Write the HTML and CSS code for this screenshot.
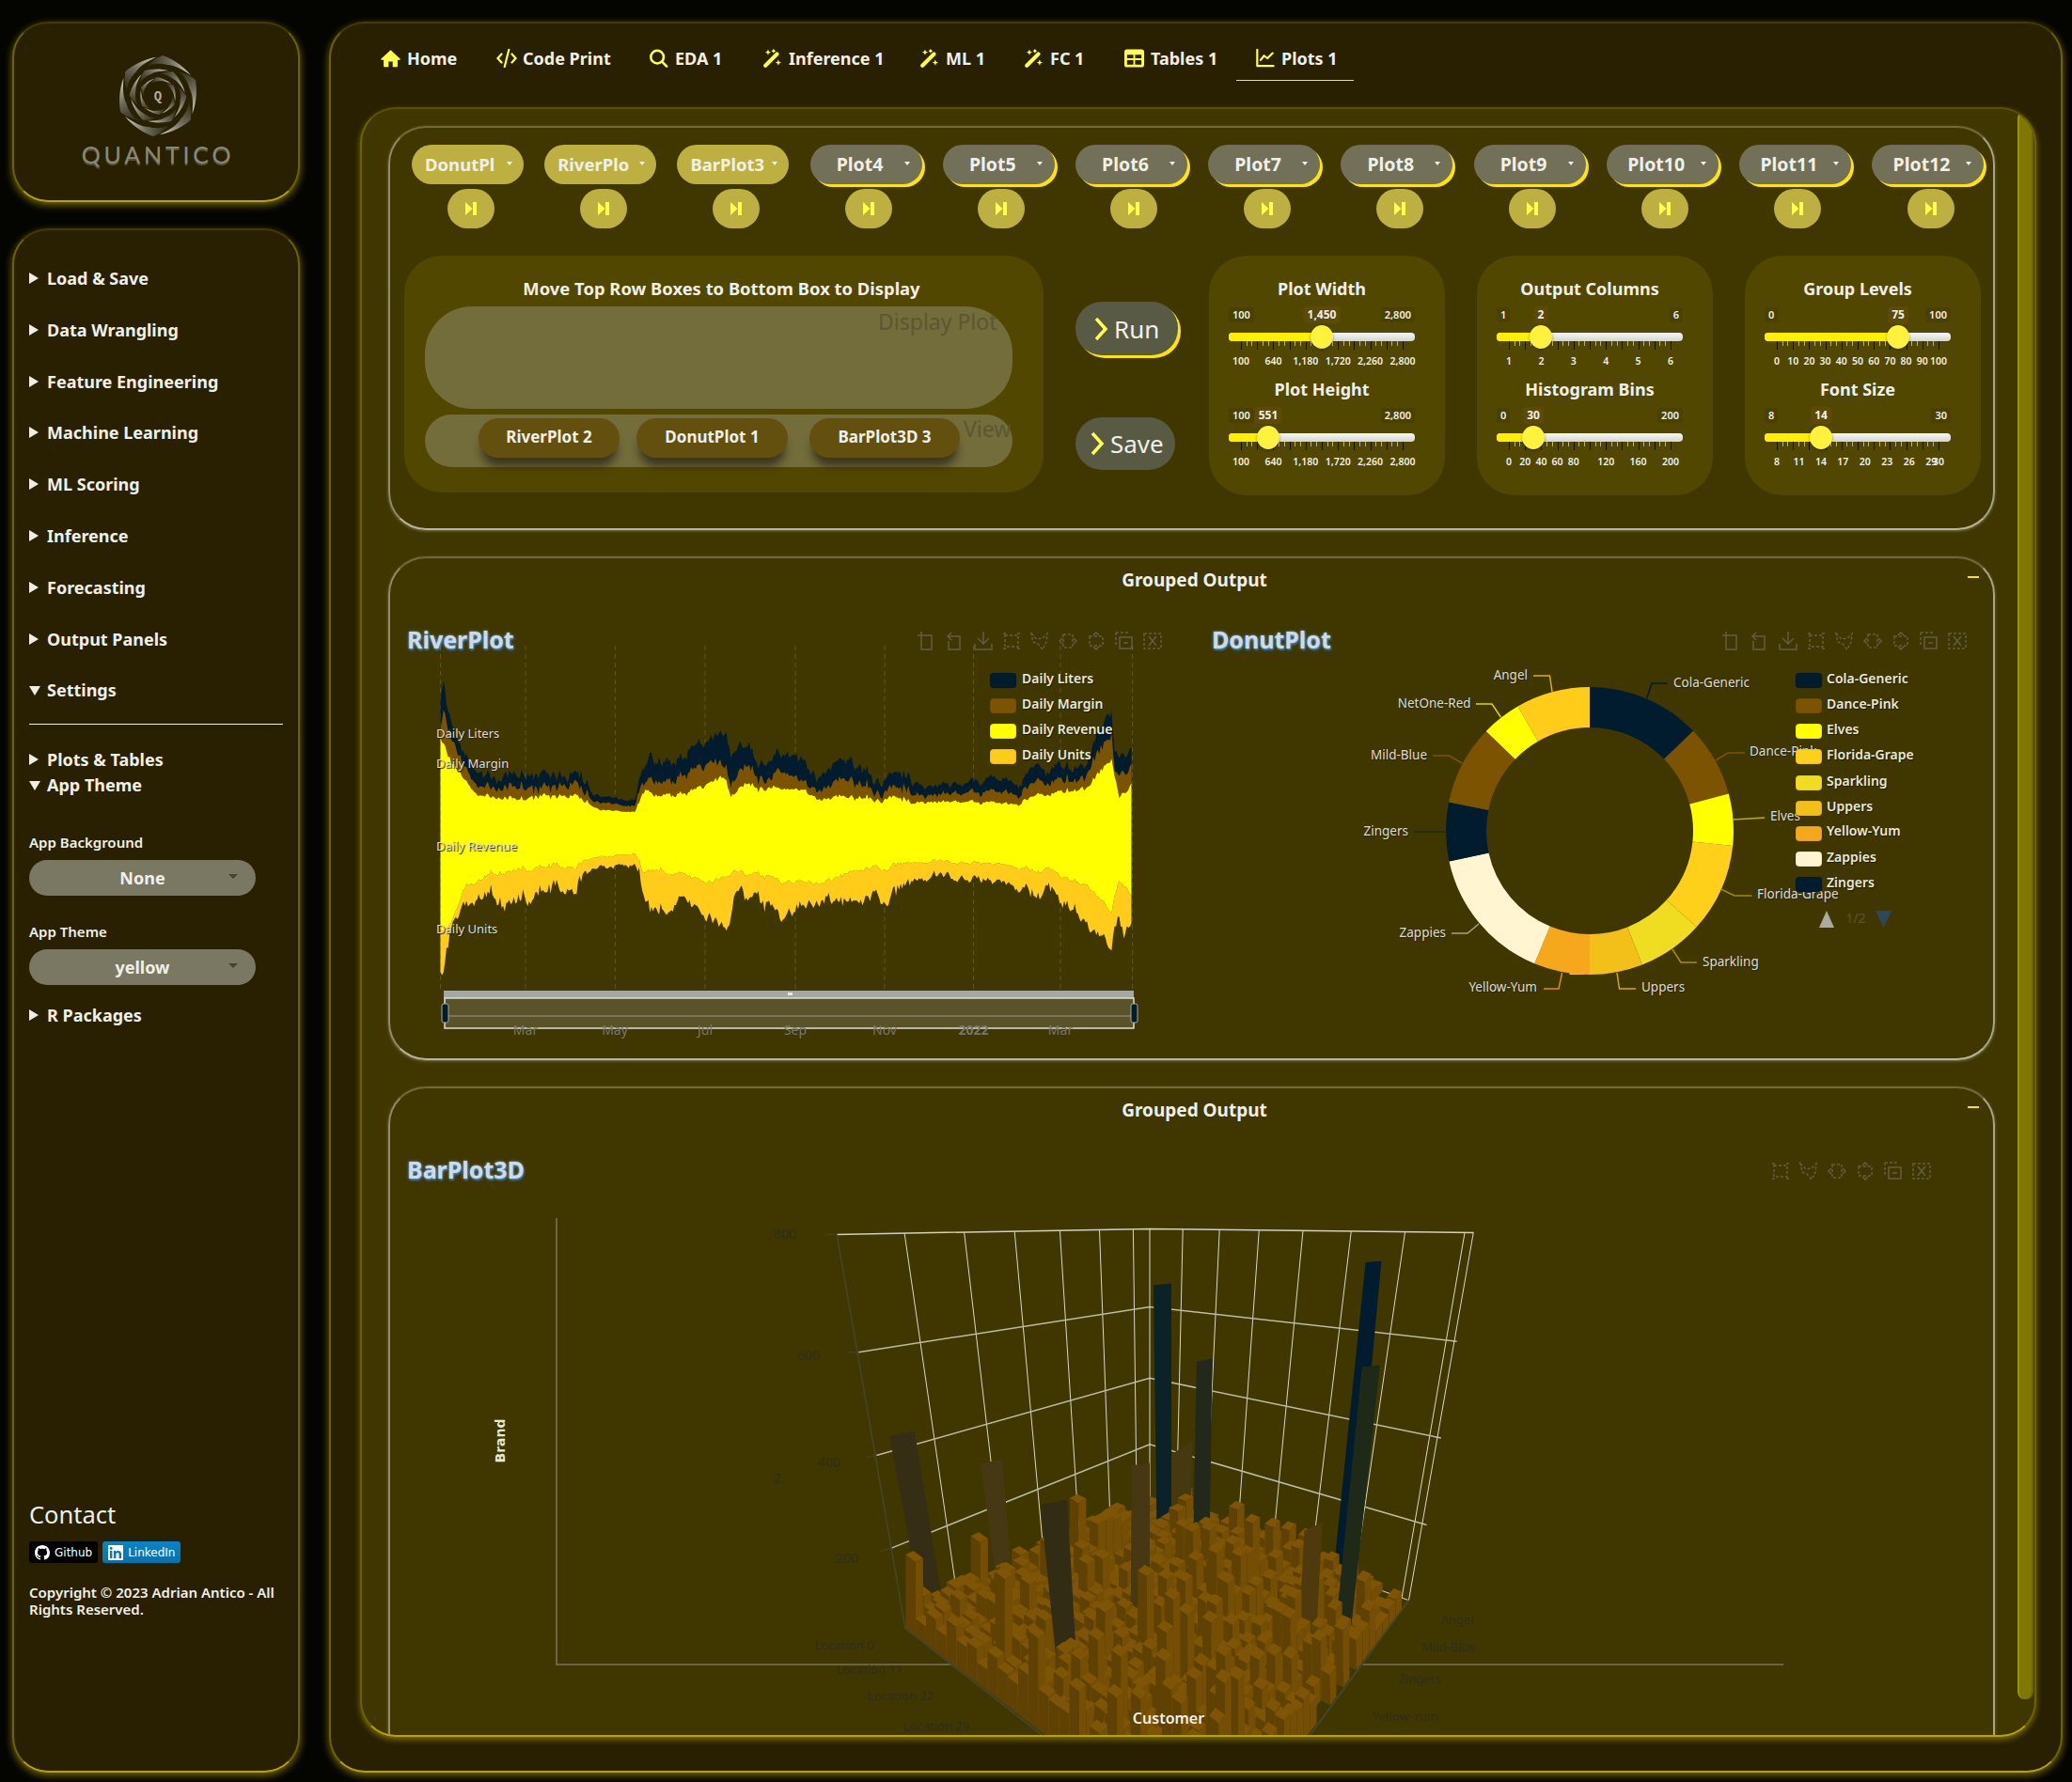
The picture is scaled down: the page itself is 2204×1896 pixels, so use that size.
FILE: index.html
```html
<!DOCTYPE html>
<html lang="en">
<head>
  <meta charset="UTF-8" />
  <meta name="viewport" content="width=device-width, initial-scale=1.0"/>
  <title>Quantico</title>
  <link rel="stylesheet" href="styles.css">
</head>
<body>
  <!-- shared icons -->
  <svg class="sprites" width="0" height="0">
    <defs>
      <linearGradient id="bladeFill" x1="0" y1="0.5" x2="1" y2="0.5">
        <stop offset="0" stop-color="#2a2810"/>
        <stop offset="0.5" stop-color="#6a6858"/>
        <stop offset="1" stop-color="#cfcebf"/>
      </linearGradient>
      <path id="blade" fill="url(#bladeFill)" d="M-12,-31 C-6,-38 0,-41 5,-43 C14,-40 26,-33 35,-22 C26,-28 18,-33 10,-33 C3,-35 -5,-35 -12,-31Z"/>
    </defs>
    <symbol id="t-zoom" viewBox="0 0 20 20"><path d="M0 4H15V19H4V0"/></symbol>
    <symbol id="t-back" viewBox="0 0 20 20"><path d="M6 1L2 5L6 9M2 5H15V19H3V10"/></symbol>
    <symbol id="t-save" viewBox="0 0 20 20"><path d="M10 0V13M4 7L10 13L16 7M1 13V19H19V13"/></symbol>
    <symbol id="t-rect" viewBox="0 0 20 20"><path stroke-dasharray="3 2" d="M3 4H17V16H3Z"/><path d="M1 2H4M16 2H19M1 18H4M16 18H19"/></symbol>
    <symbol id="t-poly" viewBox="0 0 20 20"><path stroke-dasharray="3 2" d="M1 2L7 8L13 7L18 2L17 11L13 19L8 13L3 11Z"/></symbol>
    <symbol id="t-linex" viewBox="0 0 20 20"><path stroke-dasharray="3 2" d="M5 3H15V17H5Z"/><path d="M4 7L1 10L4 13M16 7L19 10L16 13"/></symbol>
    <symbol id="t-liney" viewBox="0 0 20 20"><path stroke-dasharray="3 2" d="M3 5H17V15H3Z"/><path d="M7 4L10 1L13 4M7 16L10 19L13 16"/></symbol>
    <symbol id="t-keep" viewBox="0 0 20 20"><path stroke-dasharray="3 2" d="M1 1H13V4M1 1V13H4"/><path d="M5 6H18V18H5ZM9 12H14"/></symbol>
    <symbol id="t-clear" viewBox="0 0 20 20"><path stroke-dasharray="3 2" d="M1 2H19V18H1Z"/><path d="M6 5L14 15M14 5L6 15"/></symbol>
    <symbol id="skip" viewBox="0 0 16 16"><path d="M2 1L9.500 8L2 15ZM10 1H14V15H10Z"/></symbol>
    <symbol id="wand" viewBox="0 0 22 22">
      <path d="M3 19.500L16.500 6" fill="none" stroke="#ffff50" stroke-width="4.500" stroke-linecap="round"/>
      <path d="M15.500 1.500L16.500 0L17.500 1.500L19 2.500L17.500 3.500L16.500 5L15.500 3.500L14 2.500Z" transform="translate(-4 0)"/>
      <path d="M5 3L6 0.500L7 3L9.500 4L7 5L6 7.500L5 5L2.500 4Z"/>
      <path d="M17 15L18 12.500L19 15L21.500 16L19 17L18 19.500L17 17L14.500 16Z"/>
    </symbol>
  </svg>

  <div class="app">
    <aside class="sidebar">
      <div class="logo-card">
        <svg class="emblem" width="90" height="90" viewBox="-45 -45 90 90">
          <use href="#blade"/><use href="#blade" transform="rotate(60)"/><use href="#blade" transform="rotate(120)"/>
          <use href="#blade" transform="rotate(180)"/><use href="#blade" transform="rotate(240)"/><use href="#blade" transform="rotate(300)"/>
          <g transform="rotate(25) scale(.7)">
            <use href="#blade"/><use href="#blade" transform="rotate(60)"/><use href="#blade" transform="rotate(120)"/>
            <use href="#blade" transform="rotate(180)"/><use href="#blade" transform="rotate(240)"/><use href="#blade" transform="rotate(300)"/>
          </g>
          <g transform="rotate(50) scale(.46)">
            <use href="#blade"/><use href="#blade" transform="rotate(60)"/><use href="#blade" transform="rotate(120)"/>
            <use href="#blade" transform="rotate(180)"/><use href="#blade" transform="rotate(240)"/><use href="#blade" transform="rotate(300)"/>
          </g>
          <text class="emblem-q" x="0" y="5" text-anchor="middle">Q</text>
        </svg>
        <div class="logo-text">QUANTICO</div>
      </div>

      <nav class="menu-card">
        <div class="menu-item">Load &amp; Save</div>
        <div class="menu-item">Data Wrangling</div>
        <div class="menu-item">Feature Engineering</div>
        <div class="menu-item">Machine Learning</div>
        <div class="menu-item">ML Scoring</div>
        <div class="menu-item">Inference</div>
        <div class="menu-item">Forecasting</div>
        <div class="menu-item">Output Panels</div>
        <div class="menu-item open">Settings</div>
        <hr class="menu-rule">
        <div class="menu-item tight">Plots &amp; Tables</div>
        <div class="menu-item tight open">App Theme</div>
        <label class="field-label first">App Background</label>
        <div class="select-pill">None</div>
        <label class="field-label">App Theme</label>
        <div class="select-pill">yellow</div>
        <div class="menu-item last">R Packages</div>

        <div class="contact">
          <h4>Contact</h4>
          <div class="badges">
            <span class="badge github">
              <svg width="16" height="16" viewBox="0 0 16 16" fill="#fff"><path d="M8 0C3.58 0 0 3.58 0 8c0 3.54 2.29 6.53 5.47 7.59.4.07.55-.17.55-.38 0-.19-.01-.82-.01-1.49-2.01.37-2.53-.49-2.69-.94-.09-.23-.48-.94-.82-1.13-.28-.15-.68-.52-.01-.53.63-.01 1.08.58 1.23.82.72 1.21 1.87.87 2.33.66.07-.52.28-.87.51-1.07-1.78-.2-3.64-.89-3.64-3.95 0-.87.31-1.59.82-2.15-.08-.2-.36-1.02.08-2.12 0 0 .67-.21 2.2.82.64-.18 1.32-.27 2-.27s1.36.09 2 .27c1.53-1.04 2.2-.82 2.2-.82.44 1.1.16 1.92.08 2.12.51.56.82 1.27.82 2.15 0 3.07-1.87 3.75-3.65 3.95.29.25.54.73.54 1.48 0 1.07-.01 1.93-.01 2.2 0 .21.15.46.55.38A8.01 8.01 0 0 0 16 8c0-4.42-3.58-8-8-8z"/></svg>
              Github
            </span>
            <span class="badge linkedin">
              <svg width="16" height="16" viewBox="0 0 16 16"><rect width="16" height="16" fill="#fff"/><rect x="2" y="6" width="2.400" height="8" fill="#0a78b8"/><circle cx="3.200" cy="3.500" r="1.400" fill="#0a78b8"/><path fill="#0a78b8" d="M6 6H8.200V7.200C8.800 6.300 9.700 5.900 10.700 5.900C12.900 5.900 14 7.200 14 9.500V14H11.600V10C11.600 8.800 11.200 8 10.100 8C9 8 8.400 8.800 8.400 10V14H6Z"/></svg>
              LinkedIn
            </span>
          </div>
          <p class="copyright">Copyright © 2023 Adrian Antico - All Rights Reserved.</p>
        </div>
      </nav>
    </aside>

    <main class="main-card">
      <ul class="tabs">
        <li class="tab"><svg class="tab-icon" viewBox="0 0 24 22" fill="#ffff50"><path d="M12 1L0.500 11.500C0 12 .3 13 1.200 13H3.500V20C3.500 21 4 21.500 5 21.500H9.500V15H14.500V21.500H19C20 21.500 20.500 21 20.500 20V13H22.800C23.700 13 24 12 23.500 11.500Z"/></svg>Home</li>
        <li class="tab code"><svg class="tab-icon wide" viewBox="0 0 24 22" fill="none" stroke="#ffff50" stroke-width="2.400" stroke-linecap="round"><path d="M6 6L1.500 11L6 16M18 6L22.500 11L18 16M14.500 1L9.500 21"/></svg>Code Print</li>
        <li class="tab"><svg class="tab-icon" viewBox="0 0 22 22" fill="none" stroke="#ffff50" stroke-width="2.800" stroke-linecap="round"><circle cx="9.500" cy="9.500" r="7.500"/><path d="M15 15L20.500 20.500"/></svg>EDA 1</li>
        <li class="tab"><svg class="tab-icon" fill="#ffff50"><use href="#wand"/></svg>Inference 1</li>
        <li class="tab"><svg class="tab-icon" fill="#ffff50"><use href="#wand"/></svg>ML 1</li>
        <li class="tab"><svg class="tab-icon" fill="#ffff50"><use href="#wand"/></svg>FC 1</li>
        <li class="tab"><svg class="tab-icon" viewBox="0 0 22 20"><rect width="22" height="20" rx="3" fill="#ffff50"/><path d="M3 6H10V10H3ZM12 6H19V10H12ZM3 12H10V17H3ZM12 12H19V17H12Z" fill="#282000"/></svg>Tables 1</li>
        <li class="tab active"><svg class="tab-icon" viewBox="0 0 22 22" fill="none" stroke="#ffff50" stroke-width="2.400" stroke-linecap="round" stroke-linejoin="round"><path d="M2 1V20H21M6 13L10 8L14 11L20 5"/></svg>Plots 1</li>
      </ul>

      <div class="panel">
        <div class="scrollbar"></div>

        <section class="box controls">
          <div class="picker-row">
            <div class="picker"><div class="pick-btn on"><span class="pick-name">DonutPl</span></div><div class="skip-btn"><svg width="16" height="16"><use href="#skip"/></svg></div></div>
            <div class="picker"><div class="pick-btn on"><span class="pick-name">RiverPlo</span></div><div class="skip-btn"><svg width="16" height="16"><use href="#skip"/></svg></div></div>
            <div class="picker"><div class="pick-btn on"><span class="pick-name">BarPlot3</span></div><div class="skip-btn"><svg width="16" height="16"><use href="#skip"/></svg></div></div>
            <div class="picker"><div class="pick-btn"><span class="pick-name">Plot4</span></div><div class="skip-btn"><svg width="16" height="16"><use href="#skip"/></svg></div></div>
            <div class="picker"><div class="pick-btn"><span class="pick-name">Plot5</span></div><div class="skip-btn"><svg width="16" height="16"><use href="#skip"/></svg></div></div>
            <div class="picker"><div class="pick-btn"><span class="pick-name">Plot6</span></div><div class="skip-btn"><svg width="16" height="16"><use href="#skip"/></svg></div></div>
            <div class="picker"><div class="pick-btn"><span class="pick-name">Plot7</span></div><div class="skip-btn"><svg width="16" height="16"><use href="#skip"/></svg></div></div>
            <div class="picker"><div class="pick-btn"><span class="pick-name">Plot8</span></div><div class="skip-btn"><svg width="16" height="16"><use href="#skip"/></svg></div></div>
            <div class="picker"><div class="pick-btn"><span class="pick-name">Plot9</span></div><div class="skip-btn"><svg width="16" height="16"><use href="#skip"/></svg></div></div>
            <div class="picker"><div class="pick-btn"><span class="pick-name">Plot10</span></div><div class="skip-btn"><svg width="16" height="16"><use href="#skip"/></svg></div></div>
            <div class="picker"><div class="pick-btn"><span class="pick-name">Plot11</span></div><div class="skip-btn"><svg width="16" height="16"><use href="#skip"/></svg></div></div>
            <div class="picker"><div class="pick-btn"><span class="pick-name">Plot12</span></div><div class="skip-btn"><svg width="16" height="16"><use href="#skip"/></svg></div></div>
          </div>

          <div class="control-row">
            <div class="bucket-card">
              <div class="card-title">Move Top Row Boxes to Bottom Box to Display</div>
              <div class="bucket top"><span class="ghost-display">Display Plot</span></div>
              <div class="bucket bottom">
                <span class="chip river">RiverPlot 2</span>
                <span class="chip donut">DonutPlot 1</span>
                <span class="chip bar3d">BarPlot3D 3</span>
                <span class="ghost-view">View</span>
              </div>
            </div>

            <div class="action-col">
              <div class="action-btn run"><svg width="17" height="26" viewBox="0 0 17 26" fill="none" stroke="#ffff50" stroke-width="3.500"><path d="M3 2L13 13L3 24"/></svg>Run</div>
              <div class="action-btn save"><svg width="17" height="26" viewBox="0 0 17 26" fill="none" stroke="#ffff50" stroke-width="3.500"><path d="M3 2L13 13L3 24"/></svg>Save</div>
            </div>

            <div class="slider-card">
              <div class="slider">
                <div class="card-title">Plot Width</div>
                <div class="limits"><span>100</span><span>2,800</span><b class="val" style="left:99px">1,450</b></div>
                <div class="track"><div class="fill" style="width:99px"></div><div class="thumb" style="left:99px"></div></div>
                <div class="ticks"></div>
                <div class="tick-labels"><span style="left:0%">100</span><span style="left:20%">640</span><span style="left:40%">1,180</span><span style="left:60%">1,720</span><span style="left:80%">2,260</span><span style="left:100%">2,800</span></div>
              </div>
              <div class="slider">
                <div class="card-title">Plot Height</div>
                <div class="limits"><span>100</span><span>2,800</span><b class="val" style="left:42px">551</b></div>
                <div class="track"><div class="fill" style="width:42px"></div><div class="thumb" style="left:42px"></div></div>
                <div class="ticks"></div>
                <div class="tick-labels"><span style="left:0%">100</span><span style="left:20%">640</span><span style="left:40%">1,180</span><span style="left:60%">1,720</span><span style="left:80%">2,260</span><span style="left:100%">2,800</span></div>
              </div>
            </div>

            <div class="slider-card">
              <div class="slider">
                <div class="card-title">Output Columns</div>
                <div class="limits"><span>1</span><span>6</span><b class="val" style="left:47px">2</b></div>
                <div class="track"><div class="fill" style="width:47px"></div><div class="thumb" style="left:47px"></div></div>
                <div class="ticks"></div>
                <div class="tick-labels"><span style="left:0%">1</span><span style="left:20%">2</span><span style="left:40%">3</span><span style="left:60%">4</span><span style="left:80%">5</span><span style="left:100%">6</span></div>
              </div>
              <div class="slider">
                <div class="card-title">Histogram Bins</div>
                <div class="limits"><span>0</span><span>200</span><b class="val" style="left:39px">30</b></div>
                <div class="track"><div class="fill" style="width:39px"></div><div class="thumb" style="left:39px"></div></div>
                <div class="ticks"></div>
                <div class="tick-labels"><span style="left:0%">0</span><span style="left:10%">20</span><span style="left:20%">40</span><span style="left:30%">60</span><span style="left:40%">80</span><span style="left:60%">120</span><span style="left:80%">160</span><span style="left:100%">200</span></div>
              </div>
            </div>

            <div class="slider-card">
              <div class="slider">
                <div class="card-title">Group Levels</div>
                <div class="limits"><span>0</span><span>100</span><b class="val" style="left:142px">75</b></div>
                <div class="track"><div class="fill" style="width:142px"></div><div class="thumb" style="left:142px"></div></div>
                <div class="ticks"></div>
                <div class="tick-labels"><span style="left:0%">0</span><span style="left:10%">10</span><span style="left:20%">20</span><span style="left:30%">30</span><span style="left:40%">40</span><span style="left:50%">50</span><span style="left:60%">60</span><span style="left:70%">70</span><span style="left:80%">80</span><span style="left:90%">90</span><span style="left:100%">100</span></div>
              </div>
              <div class="slider">
                <div class="card-title">Font Size</div>
                <div class="limits"><span>8</span><span>30</span><b class="val" style="left:60px">14</b></div>
                <div class="track"><div class="fill" style="width:60px"></div><div class="thumb" style="left:60px"></div></div>
                <div class="ticks"></div>
                <div class="tick-labels"><span style="left:0%">8</span><span style="left:13.600%">11</span><span style="left:27.300%">14</span><span style="left:40.900%">17</span><span style="left:54.500%">20</span><span style="left:68.200%">23</span><span style="left:81.800%">26</span><span style="left:95.500%">29</span><span style="left:100%">30</span></div>
              </div>
            </div>
          </div>
        </section>

        <section class="box group-one">
          <h3 class="group-title">Grouped Output</h3>
          <span class="collapse-dash"></span>
          <div class="plot-grid">
            <div class="plot">
              <div class="plot-head">
                <h2 class="plot-title">RiverPlot</h2>
                <div class="toolbar">
                  <svg><use href="#t-zoom"/></svg><svg><use href="#t-back"/></svg><svg><use href="#t-save"/></svg><svg><use href="#t-rect"/></svg><svg><use href="#t-poly"/></svg><svg><use href="#t-linex"/></svg><svg><use href="#t-liney"/></svg><svg><use href="#t-keep"/></svg><svg><use href="#t-clear"/></svg>
                </div>
              </div>
              <svg class="chart" width="851" height="425" viewBox="433 700 851 425">
                <g class="gridlines">
                  <path d="M468.500 687V1053M559 687V1096M654.400 687V1096M750 687V1096M846 687V1096M941 687V1096M1035.500 687V1096M1128 687V1096M1204.600 687V1053"/>
                </g>
                <path id="riverUnits" fill="#ffcc1a"/>
                <path id="riverLiters" fill="#001c2e"/>
                <path id="riverMargin" fill="#7c5300"/>
                <path id="riverRevenue" fill="#ffff00"/>

                <text class="series-label" x="464" y="785">Daily Liters</text>
                <text class="series-label" x="464" y="817">Daily Margin</text>
                <text class="series-label" x="464" y="905">Daily Revenue</text>
                <text class="series-label" x="464" y="993">Daily Units</text>

                <rect class="swatch" x="1053" y="716" width="28" height="16" rx="4" fill="#001c2e"/>
                <rect class="swatch" x="1053" y="743" width="28" height="16" rx="4" fill="#7c5300"/>
                <rect class="swatch" x="1053" y="770" width="28" height="16" rx="4" fill="#ffff00"/>
                <rect class="swatch" x="1053" y="797" width="28" height="16" rx="4" fill="#ffcc1a"/>
                <text class="legend-label" x="1087" y="727">Daily Liters</text>
                <text class="legend-label" x="1087" y="754">Daily Margin</text>
                <text class="legend-label" x="1087" y="781">Daily Revenue</text>
                <text class="legend-label" x="1087" y="808">Daily Units</text>

                <rect x="472" y="1054" width="734" height="8" fill="#a5a8a0"/>
                <rect x="838" y="1056" width="5" height="3" fill="#e8e8e0"/>
                <rect x="473" y="1062" width="733" height="32" fill="#5a5228" stroke="#dedfd6" stroke-width="1.500"/>
                <path d="M473 1081H1206" stroke="#85826a" stroke-width="1.500"/>
                <rect x="470" y="1068" width="7" height="20" rx="2" fill="#001c2e" stroke="#a8a898"/>
                <rect x="1203" y="1068" width="7" height="20" rx="2" fill="#001c2e" stroke="#a8a898"/>
                <text class="axis-ghost" x="559" y="1101">Mar</text>
                <text class="axis-ghost" x="654" y="1101">May</text>
                <text class="axis-ghost" x="750" y="1101">Jul</text>
                <text class="axis-ghost" x="846" y="1101">Sep</text>
                <text class="axis-ghost" x="941" y="1101">Nov</text>
                <text class="axis-ghost strong" x="1035.500" y="1101">2022</text>
                <text class="axis-ghost" x="1128" y="1101">Mar</text>
              </svg>
            </div>

            <div class="plot">
              <div class="plot-head">
                <h2 class="plot-title">DonutPlot</h2>
                <div class="toolbar">
                  <svg><use href="#t-zoom"/></svg><svg><use href="#t-back"/></svg><svg><use href="#t-save"/></svg><svg><use href="#t-rect"/></svg><svg><use href="#t-poly"/></svg><svg><use href="#t-linex"/></svg><svg><use href="#t-liney"/></svg><svg><use href="#t-keep"/></svg><svg><use href="#t-clear"/></svg>
                </div>
              </div>
              <svg class="chart" width="827" height="425" viewBox="1289 700 827 425">
                <g class="donut" transform="rotate(-90 1691 884)">
                  <circle cx="1691" cy="884" r="131.500" pathLength="360" stroke="#001c2e" stroke-dasharray="46 314"/>
                  <circle cx="1691" cy="884" r="131.500" pathLength="360" stroke="#7c5300" stroke-dasharray="29 331" stroke-dashoffset="-46"/>
                  <circle cx="1691" cy="884" r="131.500" pathLength="360" stroke="#ffff00" stroke-dasharray="21 339" stroke-dashoffset="-75"/>
                  <circle cx="1691" cy="884" r="131.500" pathLength="360" stroke="#ffd01a" stroke-dasharray="36 324" stroke-dashoffset="-96"/>
                  <circle cx="1691" cy="884" r="131.500" pathLength="360" stroke="#f0dc20" stroke-dasharray="26.600 333.400" stroke-dashoffset="-132"/>
                  <circle cx="1691" cy="884" r="131.500" pathLength="360" stroke="#f2c018" stroke-dasharray="21.400 338.600" stroke-dashoffset="-158.600"/>
                  <circle cx="1691" cy="884" r="131.500" pathLength="360" stroke="#f5a81c" stroke-dasharray="22.600 337.400" stroke-dashoffset="-180"/>
                  <circle cx="1691" cy="884" r="131.500" pathLength="360" stroke="#fff5d0" stroke-dasharray="55.100 304.900" stroke-dashoffset="-202.600"/>
                  <circle cx="1691" cy="884" r="131.500" pathLength="360" stroke="#001c2e" stroke-dasharray="23.800 336.200" stroke-dashoffset="-257.700"/>
                  <circle cx="1691" cy="884" r="131.500" pathLength="360" stroke="#7c5300" stroke-dasharray="32.400 327.600" stroke-dashoffset="-281.500"/>
                  <circle cx="1691" cy="884" r="131.500" pathLength="360" stroke="#ffff00" stroke-dasharray="16.100 343.900" stroke-dashoffset="-313.900"/>
                  <circle cx="1691" cy="884" r="131.500" pathLength="360" stroke="#ffcc1a" stroke-dasharray="30 330" stroke-dashoffset="-330"/>
                </g>
                <g class="leaders">
                  <path stroke="#d8b010" d="M1631 719H1648.500L1651 736"/>
                  <path stroke="#001c2e" d="M1773.600 727H1757L1751.600 743"/>
                  <path stroke="#d8d800" d="M1570 749H1587L1596.400 763"/>
                  <path stroke="#7c5300" d="M1856 801H1838L1825 809"/>
                  <path stroke="#7c5300" d="M1524 804H1541.500L1555 812"/>
                  <path stroke="#b8b000" d="M1877 870L1843 872"/>
                  <path stroke="#1e2a1e" d="M1504 885H1539"/>
                  <path stroke="#a08a00" d="M1863.500 953H1845L1830.600 946"/>
                  <path stroke="#a8a288" d="M1544 993H1561L1573 983"/>
                  <path stroke="#a89000" d="M1805 1024H1788L1779 1010"/>
                  <path stroke="#d8a810" d="M1740 1052H1722.500L1720 1035"/>
                  <path stroke="#d8900c" d="M1642 1052H1658L1661.600 1035"/>
                </g>
                <text class="pie-label end" x="1625" y="723">Angel</text>
                <text class="pie-label" x="1780" y="731">Cola-Generic</text>
                <text class="pie-label end" x="1564.600" y="753">NetOne-Red</text>
                <text class="pie-label" x="1861" y="804">Dance-Pink</text>
                <text class="pie-label end" x="1518" y="808">Mild-Blue</text>
                <text class="pie-label" x="1883" y="873">Elves</text>
                <text class="pie-label end" x="1498" y="889">Zingers</text>
                <text class="pie-label" x="1869" y="956">Florida-Grape</text>
                <text class="pie-label end" x="1538" y="997">Zappies</text>
                <text class="pie-label" x="1811" y="1028">Sparkling</text>
                <text class="pie-label" x="1746" y="1055">Uppers</text>
                <text class="pie-label end" x="1635" y="1055">Yellow-Yum</text>

                <rect class="swatch" x="1910" y="716" width="28" height="16" rx="4" fill="#001c2e"/>
                <rect class="swatch" x="1910" y="743" width="28" height="16" rx="4" fill="#7c5300"/>
                <rect class="swatch" x="1910" y="770" width="28" height="16" rx="4" fill="#ffff00"/>
                <rect class="swatch" x="1910" y="797" width="28" height="16" rx="4" fill="#ffd01a"/>
                <rect class="swatch" x="1910" y="825" width="28" height="16" rx="4" fill="#f0dc20"/>
                <rect class="swatch" x="1910" y="852" width="28" height="16" rx="4" fill="#f2c018"/>
                <rect class="swatch" x="1910" y="879" width="28" height="16" rx="4" fill="#f5a81c"/>
                <rect class="swatch" x="1910" y="906" width="28" height="16" rx="4" fill="#fff5d0"/>
                <rect class="swatch" x="1910" y="933" width="28" height="16" rx="4" fill="#001c2e"/>
                <text class="legend-label" x="1943" y="727">Cola-Generic</text>
                <text class="legend-label" x="1943" y="754">Dance-Pink</text>
                <text class="legend-label" x="1943" y="781">Elves</text>
                <text class="legend-label" x="1943" y="808">Florida-Grape</text>
                <text class="legend-label" x="1943" y="836">Sparkling</text>
                <text class="legend-label" x="1943" y="863">Uppers</text>
                <text class="legend-label" x="1943" y="889">Yellow-Yum</text>
                <text class="legend-label" x="1943" y="917">Zappies</text>
                <text class="legend-label" x="1943" y="944">Zingers</text>
                <path d="M1943 969L1951 987H1935Z" fill="#aaaaa0"/>
                <text class="axis-dim" x="1974" y="982">1/2</text>
                <path d="M1995 969H2012L2003.500 987Z" fill="#30465e"/>
              </svg>
            </div>
          </div>
        </section>

        <section class="box group-two">
          <h3 class="group-title">Grouped Output</h3>
          <span class="collapse-dash"></span>
          <div class="plot-head wide">
            <h2 class="plot-title">BarPlot3D</h2>
            <div class="toolbar">
              <svg><use href="#t-rect"/></svg><svg><use href="#t-poly"/></svg><svg><use href="#t-linex"/></svg><svg><use href="#t-liney"/></svg><svg><use href="#t-keep"/></svg><svg><use href="#t-clear"/></svg>
            </div>
          </div>
          <svg class="chart" id="bar3d" width="1700" height="640" viewBox="415 1264 1700 640">
            <path d="M592 1296V1771H1897" fill="none" stroke="#77745c" stroke-width="1.500"/>
            <text class="brand-label" transform="translate(537 1533) rotate(-90)" text-anchor="middle">Brand</text>
            <g id="bar3dGrid"></g>
            <g id="bar3dBars"></g>
            <text class="axis-dark" x="835" y="1318">800</text>
            <text class="axis-dark" x="860" y="1447">600</text>
            <text class="axis-dark" x="882" y="1561">400</text>
            <text class="axis-dark" x="901" y="1663">200</text>
            <text class="axis-dark" x="827" y="1578">Z</text>
            <text class="axis-dark small" x="898" y="1755">Location 0</text>
            <text class="axis-dark small" x="925" y="1781">Location 11</text>
            <text class="axis-dark small" x="958" y="1809">Location 22</text>
            <text class="axis-dark small" x="996" y="1841">Location 29</text>
            <text class="axis-dark small" x="1550" y="1728">Angel</text>
            <text class="axis-dark small" x="1541" y="1757">Mild-Blue</text>
            <text class="axis-dark small" x="1510" y="1791">Zingers</text>
            <text class="axis-dark small" x="1495" y="1831">Yellow-Yum</text>
            <text class="axis-name" x="1243" y="1834">Customer</text>
          </svg>
        </section>
      </div>
    </main>
  </div>

  <script>
    // small seeded random so the charts draw the same each time
    let seed = 20231;
    function rnd() {
      seed = (seed * 1664525 + 1013904223) % 4294967296;
      return seed / 4294967296;
    }

    function lerpCtrl(ctrl, x) {
      for (let i = 1; i < ctrl.length; i++) {
        if (x <= ctrl[i][0]) {
          const a = ctrl[i - 1], b = ctrl[i];
          return a[1] + (b[1] - a[1]) * (x - a[0]) / (b[0] - a[0]);
        }
      }
      return ctrl[ctrl.length - 1][1];
    }

    // River boundaries, measured off the picture
    const top0 = [[108,330],[113,265],[125,380],[150,470],[180,530],[230,550],[270,530],[300,545],[350,570],[385,570],[410,620],[490,630],[500,560],[520,490],[545,530],[585,470],[605,460],[640,430],[668,430],[680,500],[705,470],[760,530],[770,480],[815,490],[850,540],[910,510],[950,545],[1030,555],[1050,590],[1120,585],[1210,570],[1290,550],[1370,520],[1425,370],[1432,490],[1465,460]];
    const top1 = [[108,420],[113,360],[130,450],[150,510],[180,575],[230,590],[270,575],[300,595],[380,600],[410,640],[490,650],[500,600],[520,560],[545,590],[585,540],[640,510],[668,530],[680,590],[705,530],[760,580],[770,540],[815,560],[850,590],[910,570],[950,590],[1030,600],[1050,620],[1120,615],[1210,610],[1290,590],[1370,560],[1425,440],[1432,550],[1465,520]];
    const top2 = [[108,440],[130,520],[180,610],[230,625],[300,620],[380,630],[420,665],[490,670],[510,600],[540,625],[600,600],[665,560],[680,625],[705,585],[760,600],[820,595],[850,625],[1000,625],[1040,640],[1120,640],[1220,645],[1300,620],[1380,590],[1425,510],[1440,620],[1465,580]];
    const bot0 = [[108,1050],[120,1060],[160,900],[230,855],[300,850],[380,840],[410,815],[490,805],[505,860],[540,850],[600,885],[640,900],[680,860],[750,880],[820,900],[900,870],[1000,840],[1080,830],[1200,840],[1300,860],[1380,900],[1425,990],[1440,880],[1465,940]];
    const bot1 = [[108,1190],[115,1205],[130,1030],[175,930],[265,945],[375,905],[410,845],[490,840],[510,940],[520,975],[580,960],[650,1030],[670,1030],[690,920],[770,990],[820,985],[860,920],[920,970],[1000,925],[1050,885],[1100,880],[1200,900],[1300,930],[1350,965],[1400,1050],[1425,1100],[1440,980],[1450,1060],[1465,1020]];

    function band(upper, lower) {
      let d = '';
      upper.forEach((p, i) => { d += (i ? 'L' : 'M') + p[0].toFixed(1) + ' ' + p[1].toFixed(1); });
      for (let i = lower.length - 1; i >= 0; i--) d += 'L' + lower[i][0].toFixed(1) + ' ' + lower[i][1].toFixed(1);
      return d + 'Z';
    }

    const rows = [[], [], [], [], []];
    let slowTop = 0, slowBot = 0;
    for (let x = 108; x <= 1465; x += 3) {
      const calm = x > 400 && x < 495 ? 0.25 : (x > 1040 && x < 1240 ? 0.55 : 1);
      slowTop = slowTop * 0.8 + (rnd() - 0.5) * 34;
      slowBot = slowBot * 0.8 + (rnd() - 0.5) * 38;
      const jt = (slowTop + (rnd() - 0.5) * 18) * calm;
      const jb = (slowBot + (rnd() - 0.5) * 20) * calm;
      const jm = (rnd() - 0.5) * 18 * calm;
      const px = 410 + x / 1.845;
      const y0 = lerpCtrl(top0, x) + jt;
      const y1 = lerpCtrl(top1, x) + jt * 0.7 + jm;
      const y2 = lerpCtrl(top2, x) + jt * 0.35 + jm * 0.6;
      const y3 = lerpCtrl(bot0, x) + jb * 0.4;
      const y4 = lerpCtrl(bot1, x) + jb;
      [y0, Math.max(y0, y1), Math.max(y1, y2), y3, Math.max(y3, y4)].forEach((y, i) => rows[i].push([px, 640 + y / 3]));
    }
    document.getElementById('riverLiters').setAttribute('d', band(rows[0], rows[1]));
    document.getElementById('riverMargin').setAttribute('d', band(rows[1], rows[2]));
    document.getElementById('riverRevenue').setAttribute('d', band(rows[2], rows[3]));
    document.getElementById('riverUnits').setAttribute('d', band(rows[3], rows[4]));

    // 3D bars, points are given in crop units then moved to page space
    const SVGNS = 'http://www.w3.org/2000/svg';
    const pt = (x, y) => (500 + x / 1.307).toFixed(1) + ' ' + (1260 + y / 2.53).toFixed(1);
    function poly(parent, points, fill, stroke, width) {
      const el = document.createElementNS(SVGNS, 'path');
      el.setAttribute('d', 'M' + points.map(p => pt(p[0], p[1])).join('L') + (fill ? 'Z' : ''));
      el.setAttribute('fill', fill || 'none');
      if (stroke) {
        el.setAttribute('stroke', stroke);
        el.setAttribute('stroke-width', width || 1);
      }
      parent.appendChild(el);
    }

    const grid = document.getElementById('bar3dGrid');
    const GRID = '#d8d8cc';
    [604, 687, 757, 820, 875, 922].forEach(x => {
      const t = (x - 510) / 435;
      poly(grid, [[x, 135 - t * 15], [605 + t * 340, 1195 - t * 325]], null, GRID, 1);
    });
    [991, 1042, 1097, 1158, 1225, 1300, 1383].forEach(x => {
      const t = (x - 945) / 450;
      poly(grid, [[x, 120 + t * 10], [945 + t * 360, 870 + t * 250]], null, GRID, 1);
    });
    [[[540, 452], [945, 330], [1372, 423]], [[565, 730], [945, 522], [1350, 683]], [[585, 980], [945, 700], [1330, 917]]].forEach(l => {
      poly(grid, l, null, '#bcbba6', 1.5);
    });
    poly(grid, [[510, 135], [945, 120], [1395, 130]], null, '#cfcfc2', 1.5);
    poly(grid, [[945, 120], [945, 870]], null, GRID, 1);
    poly(grid, [[1395, 130], [1305, 1120]], null, GRID, 1);
    poly(grid, [[510, 135], [605, 1195]], null, '#45442f', 1.5);
    poly(grid, [[495, 135], [510, 135]], null, '#45442f', 1);
    poly(grid, [[525, 452], [540, 452]], null, '#45442f', 1);
    poly(grid, [[550, 735], [565, 730]], null, '#45442f', 1);
    poly(grid, [[570, 988], [585, 980]], null, '#45442f', 1);
    poly(grid, [[945, 870], [605, 1195]], null, GRID, 1);
    poly(grid, [[945, 870], [1305, 1120]], null, GRID, 1);
    poly(grid, [[605, 1195], [800, 1490]], null, '#45442f', 2);
    poly(grid, [[1305, 1120], [1165, 1490]], null, '#45442f', 2);

    const B = [945, 870], L = [605, 1195], R = [1305, 1120], F = [1032, 1830];
    function floor(u, v) {
      return [
        B[0] * (1 - u) * (1 - v) + L[0] * u * (1 - v) + R[0] * (1 - u) * v + F[0] * u * v,
        B[1] * (1 - u) * (1 - v) + L[1] * u * (1 - v) + R[1] * (1 - u) * v + F[1] * u * v
      ];
    }

    const items = [];
    const N = 30;
    for (let i = 0; i < N; i++) {
      for (let j = 0; j < N; j++) {
        const sparse = j / N > 0.6 && i / N < 0.45;
        if (rnd() < (sparse ? 0.3 : 0.04)) continue;
        const u0 = i / N, u1 = (i + 0.95) / N, v0 = j / N, v1 = (j + 0.95) / N;
        const depth = floor(u1, v1)[1];
        let h = 18 + rnd() * 70;
        if (rnd() < 0.1) h += 40 + rnd() * 100;
        if (sparse) h *= 0.7;
        h *= 0.55 + (u0 + v0) * 0.7;
        items.push({ depth, draw(g) {
          const a = floor(u0, v1), b = floor(u1, v1), c = floor(u1, v0), d = floor(u0, v0);
          const up = p => [p[0], p[1] - h];
          poly(g, [up(c), up(b), b, c], '#5f4103');
          poly(g, [up(a), up(b), b, a], '#744e04');
          poly(g, [up(a), up(b), up(c), up(d)], '#7e5506');
        }});
      }
    }

    // the tall bars are traced by hand
    [
      [[583, 678], [618, 665], [655, 1100], [625, 1110], '#352d14'],
      [[710, 752], [740, 740], [752, 1030], [730, 1040], '#463812'],
      [[793, 862], [830, 850], [845, 1340], [820, 1375], '#322c15'],
      [[950, 272], [975, 267], [975, 950], [955, 965], '#0b2228'],
      [[1010, 477], [1032, 470], [1028, 990], [1005, 1010], '#22291a'],
      [[920, 757], [945, 750], [945, 1220], [918, 1250], '#473712'],
      [[975, 727], [1005, 690], [1000, 950], [975, 970], '#46380f'],
      [[1245, 210], [1267, 207], [1225, 1080], [1198, 1090], '#001c2e'],
      [[1240, 492], [1265, 487], [1225, 1190], [1200, 1260], '#1f2918'],
      [[1160, 932], [1185, 910], [1175, 1260], [1150, 1285], '#4e3a0c']
    ].forEach(b => {
      items.push({ depth: b[3][1] - 30, draw(g) { poly(g, b.slice(0, 4), b[4]); } });
    });

    const barsG = document.getElementById('bar3dBars');
    items.sort((a, b) => a.depth - b.depth).forEach(it => it.draw(barsG));
  </script>
</body>
</html>
```

FILE: styles.css
```css
* {
  box-sizing: border-box;
}

body {
  margin: 0;
  background: #050500;
  font-family: "Noto Sans", "Open Sans", sans-serif;
  color: #f0f0e8;
  width: 2204px;
  height: 1896px;
  overflow: hidden;
}

.sprites {
  position: absolute;
}

.app {
  display: flex;
  gap: 31px;
  height: 1896px;
  padding: 23px 10px 10px 13px;
}

.sidebar {
  width: 306px;
  flex: none;
  display: flex;
  flex-direction: column;
  gap: 28px;
}

.logo-card,
.menu-card,
.main-card {
  background: #282000;
  border: 2px solid #6d6200;
  border-top-color: #423a00;
  border-bottom-color: #b8a400;
  border-radius: 38px;
  box-shadow: 0 3px 9px #b09c00aa;
}

.logo-card {
  height: 192px;
  display: flex;
  flex-direction: column;
  align-items: center;
  padding: 32px 0 0 4px;
}

.emblem {
  display: block;
}

.emblem-q {
  font-family: "Liberation Mono", monospace;
  font-size: 14px;
  font-weight: bold;
  fill: #b0af9e;
}

.logo-text {
  font-family: "Lato", sans-serif;
  font-size: 25px;
  font-weight: 400;
  letter-spacing: 3.800px;
  color: #8b8976;
  text-shadow: 0 2px 0 #55533f;
  line-height: 28px;
  margin-top: 3px;
}

.menu-card {
  flex: 1;
  display: flex;
  flex-direction: column;
  padding: 40px 18px 163px 16px;
}

.menu-item {
  position: relative;
  font-size: 18px;
  font-weight: 700;
  line-height: 22px;
  padding-left: 19px;
  margin-bottom: 32.800px;
  white-space: nowrap;
}

.menu-item::before {
  content: "";
  position: absolute;
  left: 0;
  top: 5px;
  border-left: 10px solid #eeeee6;
  border-top: 6px solid transparent;
  border-bottom: 6px solid transparent;
}

.menu-item.open::before {
  top: 7px;
  border-left: 6px solid transparent;
  border-right: 6px solid transparent;
  border-top: 10px solid #eeeee6;
  border-bottom: none;
}

.menu-rule {
  width: 270px;
  margin: -8px 0 26px;
  border: none;
  border-top: 1px solid #f0f0e8;
}

.menu-item.tight {
  margin-bottom: 5px;
}

.field-label {
  display: block;
  font-size: 15px;
  font-weight: 600;
  line-height: 20px;
  margin: 0 0 9px;
}

.field-label.first {
  margin-top: 35px;
}

.select-pill {
  position: relative;
  width: 241px;
  height: 38px;
  border-radius: 19px;
  background: #7a7763;
  font-size: 18px;
  font-weight: 700;
  line-height: 38px;
  text-align: center;
  margin-bottom: 28px;
}

.select-pill::after {
  content: "";
  position: absolute;
  right: 19px;
  top: 15px;
  border-left: 5px solid transparent;
  border-right: 5px solid transparent;
  border-top: 5px solid #45432f;
}

.menu-item.last {
  margin-top: -7px;
}

.contact {
  margin-top: auto;
}

.contact h4 {
  margin: 0 0 11px;
  font-size: 25.500px;
  font-weight: 400;
  line-height: 36px;
}

.badges {
  display: flex;
  gap: 5px;
}

.badge {
  display: flex;
  align-items: center;
  gap: 5px;
  height: 23px;
  padding: 0 6px;
  border-radius: 3px;
  font-family: "DejaVu Sans", sans-serif;
  font-size: 12px;
  color: #fff;
}

.badge.github {
  background: #000;
}

.badge.linkedin {
  background: linear-gradient(#0a84c8, #0a70ac);
}

.copyright {
  margin: 22px 0 0;
  font-size: 15px;
  font-weight: 600;
  line-height: 18px;
  width: 270px;
}

.main-card {
  flex: 1;
  display: flex;
  flex-direction: column;
  min-width: 0;
}

.tabs {
  list-style: none;
  margin: 0 0 0 33px;
  padding: 0;
  height: 89px;
  display: grid;
  grid-template-columns: 122px 163px 121px 167px 111px 107px 139px 125px;
  justify-content: start;
}

.tab {
  display: flex;
  align-items: center;
  gap: 7px;
  padding: 6px 0 0 20px;
  height: 54px;
  margin-top: 7px;
  font-size: 18px;
  font-weight: 700;
  white-space: nowrap;
}

.tab.code {
  gap: 5px;
}

.tab.active {
  border-bottom: 1px solid #c8def0;
}

.tab-icon {
  width: 21px;
  height: 20px;
  flex: none;
}

.tab-icon.wide {
  width: 24px;
}

.panel {
  position: relative;
  flex: none;
  height: 1734px;
  margin: 0 26px 0 31px;
  padding: 18px 42px 0 28px;
  background: #403700;
  border: 2px solid #6d6200;
  border-top-color: #5a5000;
  border-bottom-color: #b8a400;
  border-radius: 38px;
  box-shadow: 0 3px 6px #a89400aa;
  overflow: hidden;
}

.scrollbar {
  position: absolute;
  right: 1px;
  top: 2px;
  width: 17px;
  height: 1690px;
  border-radius: 8px;
  background: #7f7800;
  border-left: 2px solid #9a9300;
  border-right: 2px solid #6a6300;
}

.box {
  position: relative;
  border: 2px solid #8e8a6a;
  border-top-color: #6e6a3c;
  border-bottom-color: #b8b59c;
  border-right-color: #a6a388;
  border-radius: 40px;
  box-shadow: 0 1px 3px #d8d8c066;
}

.controls {
  height: 430px;
  padding: 18px 0 0 23px;
}

.group-one {
  height: 536px;
  margin-top: 28px;
}

.group-two {
  height: 900px;
  margin-top: 28px;
}

.picker-row {
  display: flex;
  gap: 22.200px;
}

.picker {
  width: 119px;
  flex: none;
  display: flex;
  flex-direction: column;
  align-items: center;
  gap: 5px;
}

.pick-btn {
  position: relative;
  width: 119px;
  height: 42px;
  border-radius: 21px;
  background: #737059;
  box-shadow: 3px 3px 0 #ffe600;
  font-size: 19.500px;
  font-weight: 700;
  line-height: 41px;
  text-align: center;
  padding-right: 13px;
}

.pick-btn.on {
  background: #bdb040;
  box-shadow: none;
  font-size: 18.500px;
  padding: 0 23px 0 14px;
  text-align: left;
}

.pick-btn::after {
  content: "";
  position: absolute;
  right: 13px;
  top: 18px;
  border-left: 3.500px solid transparent;
  border-right: 3.500px solid transparent;
  border-top: 4px solid #f0f0e8;
}

.pick-btn.on::after {
  right: 12px;
}

.pick-name {
  display: block;
  white-space: nowrap;
}

.skip-btn {
  width: 50px;
  height: 42px;
  margin-left: 6px;
  border-radius: 21px;
  background: #bdb040;
  display: flex;
  align-items: center;
  justify-content: center;
  fill: #ffff50;
}

.control-row {
  display: flex;
  align-items: flex-start;
  margin: 29px 0 0 -8px;
}

.bucket-card {
  width: 680px;
  height: 252px;
  padding: 25px 33px 0 22px;
  border-radius: 40px;
  background: #524700;
  flex: none;
}

.card-title {
  font-size: 18px;
  font-weight: 700;
  line-height: 20px;
  text-align: center;
  white-space: nowrap;
}

.bucket-card .card-title {
  font-size: 18.400px;
  padding-left: 6px;
}

.bucket {
  position: relative;
  background: #736c3b;
  margin-top: 9px;
}

.bucket.top {
  height: 109px;
  border-radius: 50px;
}

.bucket.bottom {
  height: 56px;
  margin-top: 6px;
  border-radius: 28px;
  display: flex;
  gap: 18px;
  padding: 4px 0 0 57px;
}

.ghost-display {
  position: absolute;
  left: 482px;
  top: 0;
  white-space: nowrap;
  font-size: 23px;
  color: #5c5733;
}

.ghost-view {
  position: absolute;
  left: 573px;
  top: -1px;
  font-size: 23px;
  color: #5c5733;
}

.chip {
  height: 42px;
  border-radius: 21px;
  background: #63500e;
  box-shadow: 0 12px 10px -3px #2e2818cc;
  font-size: 17px;
  font-weight: 700;
  line-height: 40px;
  text-align: center;
  white-space: nowrap;
}

.chip.river {
  width: 150px;
}

.chip.donut {
  width: 161px;
}

.chip.bar3d {
  width: 160px;
  margin-left: 5px;
}

.action-col {
  width: 142px;
  margin-left: 34px;
  flex: none;
  padding-top: 49px;
}

.action-btn {
  display: flex;
  align-items: center;
  gap: 5px;
  background: #595a43;
  color: #f0f0e8;
  font-size: 26px;
  line-height: 40px;
  padding-left: 19px;
}

.action-btn.run {
  width: 109px;
  height: 57px;
  border-radius: 28px;
  box-shadow: 3px 3px 0 #ffe600;
}

.action-btn.save {
  width: 106px;
  height: 56px;
  margin-top: 66px;
  border-radius: 28px;
  padding-left: 15px;
}

.slider-card {
  width: 251px;
  height: 255px;
  margin-right: 34px;
  padding: 25px 0 0 21px;
  border-radius: 40px;
  background: #524700;
  flex: none;
}

.slider {
  width: 198px;
  margin-bottom: 14px;
}

.limits {
  position: relative;
  display: flex;
  justify-content: space-between;
  height: 16px;
  margin: 10px 0 11px;
}

.limits span {
  padding: 0 4px;
  border-radius: 3px;
  background: #00000018;
  font-size: 11px;
  font-weight: 600;
  line-height: 16px;
}

.limits .val {
  position: absolute;
  top: -1px;
  transform: translateX(-50%);
  padding: 1px 4px;
  border-radius: 3px;
  background: #5e4a08;
  font-size: 12px;
  font-weight: 700;
  line-height: 16px;
}

.track {
  position: relative;
  height: 9px;
  border-radius: 4px;
  background: linear-gradient(#f8f8f8, #d4d4d0);
}

.fill {
  height: 9px;
  border-radius: 4px 0 0 4px;
  background: #fff000;
}

.thumb {
  position: absolute;
  top: -8px;
  width: 24px;
  height: 25px;
  margin-left: -12px;
  border-radius: 50%;
  background: #fff23c;
  box-shadow: 0 1px 3px #0006;
}

.ticks {
  height: 9px;
  margin: 0 13px;
  width: 173px;
  background-image:
    repeating-linear-gradient(to right, #14120a 0 1px, transparent 1px 17.200px),
    repeating-linear-gradient(to right, #b0ae9c 0 1px, transparent 1px 5.730px);
  background-size: 100% 9px, 100% 5px;
  background-repeat: no-repeat;
}

.tick-labels {
  position: relative;
  height: 12px;
  margin: 6px 13px 0;
}

.tick-labels span {
  position: absolute;
  top: 0;
  transform: translateX(-50%);
  font-size: 10.500px;
  font-weight: 600;
  line-height: 12px;
  white-space: nowrap;
}

.group-title {
  margin: 0;
  padding: 11px 0 0 6px;
  font-size: 19px;
  font-weight: 700;
  line-height: 24px;
  text-align: center;
}

.collapse-dash {
  position: absolute;
  right: 15px;
  top: 19px;
  width: 12px;
  height: 2px;
  background: #ffe600;
}

.plot-grid {
  display: grid;
  grid-template-columns: 856px 827px;
  margin: 31px 0 0 18px;
}

.plot-head {
  display: flex;
  justify-content: space-between;
  align-items: center;
  height: 40px;
  padding-right: 53px;
}

.plot-grid .plot:last-child .plot-head {
  padding-right: 24px;
}

.plot-head.wide {
  margin: 31px 0 0 18px;
  padding-right: 66px;
}

.plot-title {
  margin: 0;
  font-size: 25px;
  font-weight: 700;
  line-height: 40px;
  color: #cfdbe4;
  text-shadow: 0 0 3px #6ea4d8, 1px 2px 2px #2f6ea8;
}

.toolbar {
  display: flex;
  gap: 10px;
  margin-top: 4px;
}

.toolbar svg {
  width: 20px;
  height: 20px;
  fill: none;
  stroke: #5f5d45;
  stroke-width: 1.500;
}

.chart {
  display: block;
  overflow: visible;
}

.gridlines path {
  fill: none;
  stroke: #ffffff26;
  stroke-dasharray: 5 4;
}

.series-label {
  font-size: 13px;
  fill: #dcdccc;
  text-shadow: 1px 1px 1px #222;
}

.pie-label {
  font-size: 13.500px;
  fill: #dcdccc;
  text-shadow: 1px 1px 1px #222;
}

.pie-label.end {
  text-anchor: end;
}

.legend-label {
  font-size: 14px;
  font-weight: 600;
  fill: #e8e8d8;
  text-shadow: 1px 1px 1px #0008;
}

.swatch {
  stroke: #0002;
}

.axis-ghost {
  font-size: 14px;
  fill: #77766a;
  text-anchor: middle;
}

.axis-ghost.strong {
  font-weight: 700;
}

.axis-dim {
  font-size: 14px;
  fill: #57533a;
  text-anchor: middle;
}

.donut circle {
  fill: none;
  stroke-width: 43;
}

.leaders path {
  fill: none;
  stroke-width: 1.500;
}

.brand-label {
  font-family: "DejaVu Sans", sans-serif;
  font-size: 14px;
  font-weight: 700;
  fill: #e8e8d8;
}

.axis-dark {
  font-size: 14px;
  fill: #2f2d1c;
  text-anchor: middle;
}

.axis-dark.small {
  font-size: 13px;
}

.axis-name {
  font-size: 16px;
  font-weight: 600;
  fill: #f0f0e8;
  text-anchor: middle;
}
```
